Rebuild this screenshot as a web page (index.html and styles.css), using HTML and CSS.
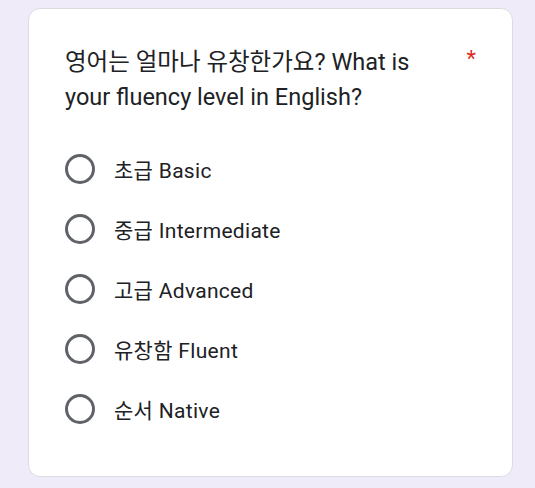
FILE: index.html
```html
<!DOCTYPE html>
<html lang="ko">
<head>
<meta charset="utf-8">
<link rel="stylesheet" href="styles.css">
</head>
<body>
<div class="card">
  <div class="question">
    <div class="q-text">영어는 얼마나 유창한가요? What is your fluency level in English?</div>
    <span class="req">*</span>
  </div>
  <div class="options">
    <label class="option"><span class="radio"></span><span class="label">초급 Basic</span></label>
    <label class="option"><span class="radio"></span><span class="label">중급 Intermediate</span></label>
    <label class="option"><span class="radio"></span><span class="label">고급 Advanced</span></label>
    <label class="option"><span class="radio"></span><span class="label">유창함 Fluent</span></label>
    <label class="option"><span class="radio"></span><span class="label">순서 Native</span></label>
  </div>
</div>
</body>
</html>
```

FILE: styles.css
```css
html, body {
  margin: 0;
  padding: 0;
  background: #f0ebf8;
}
body {
  padding: 8px 22px 0 28px;
  font-family: Roboto, "Noto Sans CJK KR", sans-serif;
  color: #202124;
}
.card {
  background: #fff;
  border: 1px solid #dadce0;
  border-radius: 12px;
  height: 469px;
  box-sizing: border-box;
  padding: 36px 36px 0 36px;
}
.question {
  display: flex;
  justify-content: space-between;
  align-items: flex-start;
}
.q-text {
  width: 380px;
  font-size: 23.5px;
  line-height: 35px;
}
.req {
  color: #d93025;
  font-size: 22px;
  line-height: 28px;
}
.options {
  margin-top: 24px;
  display: flex;
  flex-direction: column;
}
.option {
  height: 60px;
  display: flex;
  align-items: center;
}
.radio {
  width: 30px;
  height: 30px;
  box-sizing: border-box;
  border: 3px solid #5f6368;
  border-radius: 50%;
  margin-right: 19px;
  flex-shrink: 0;
}
.label {
  font-size: 21px;
  letter-spacing: 0.3px;
}
```
